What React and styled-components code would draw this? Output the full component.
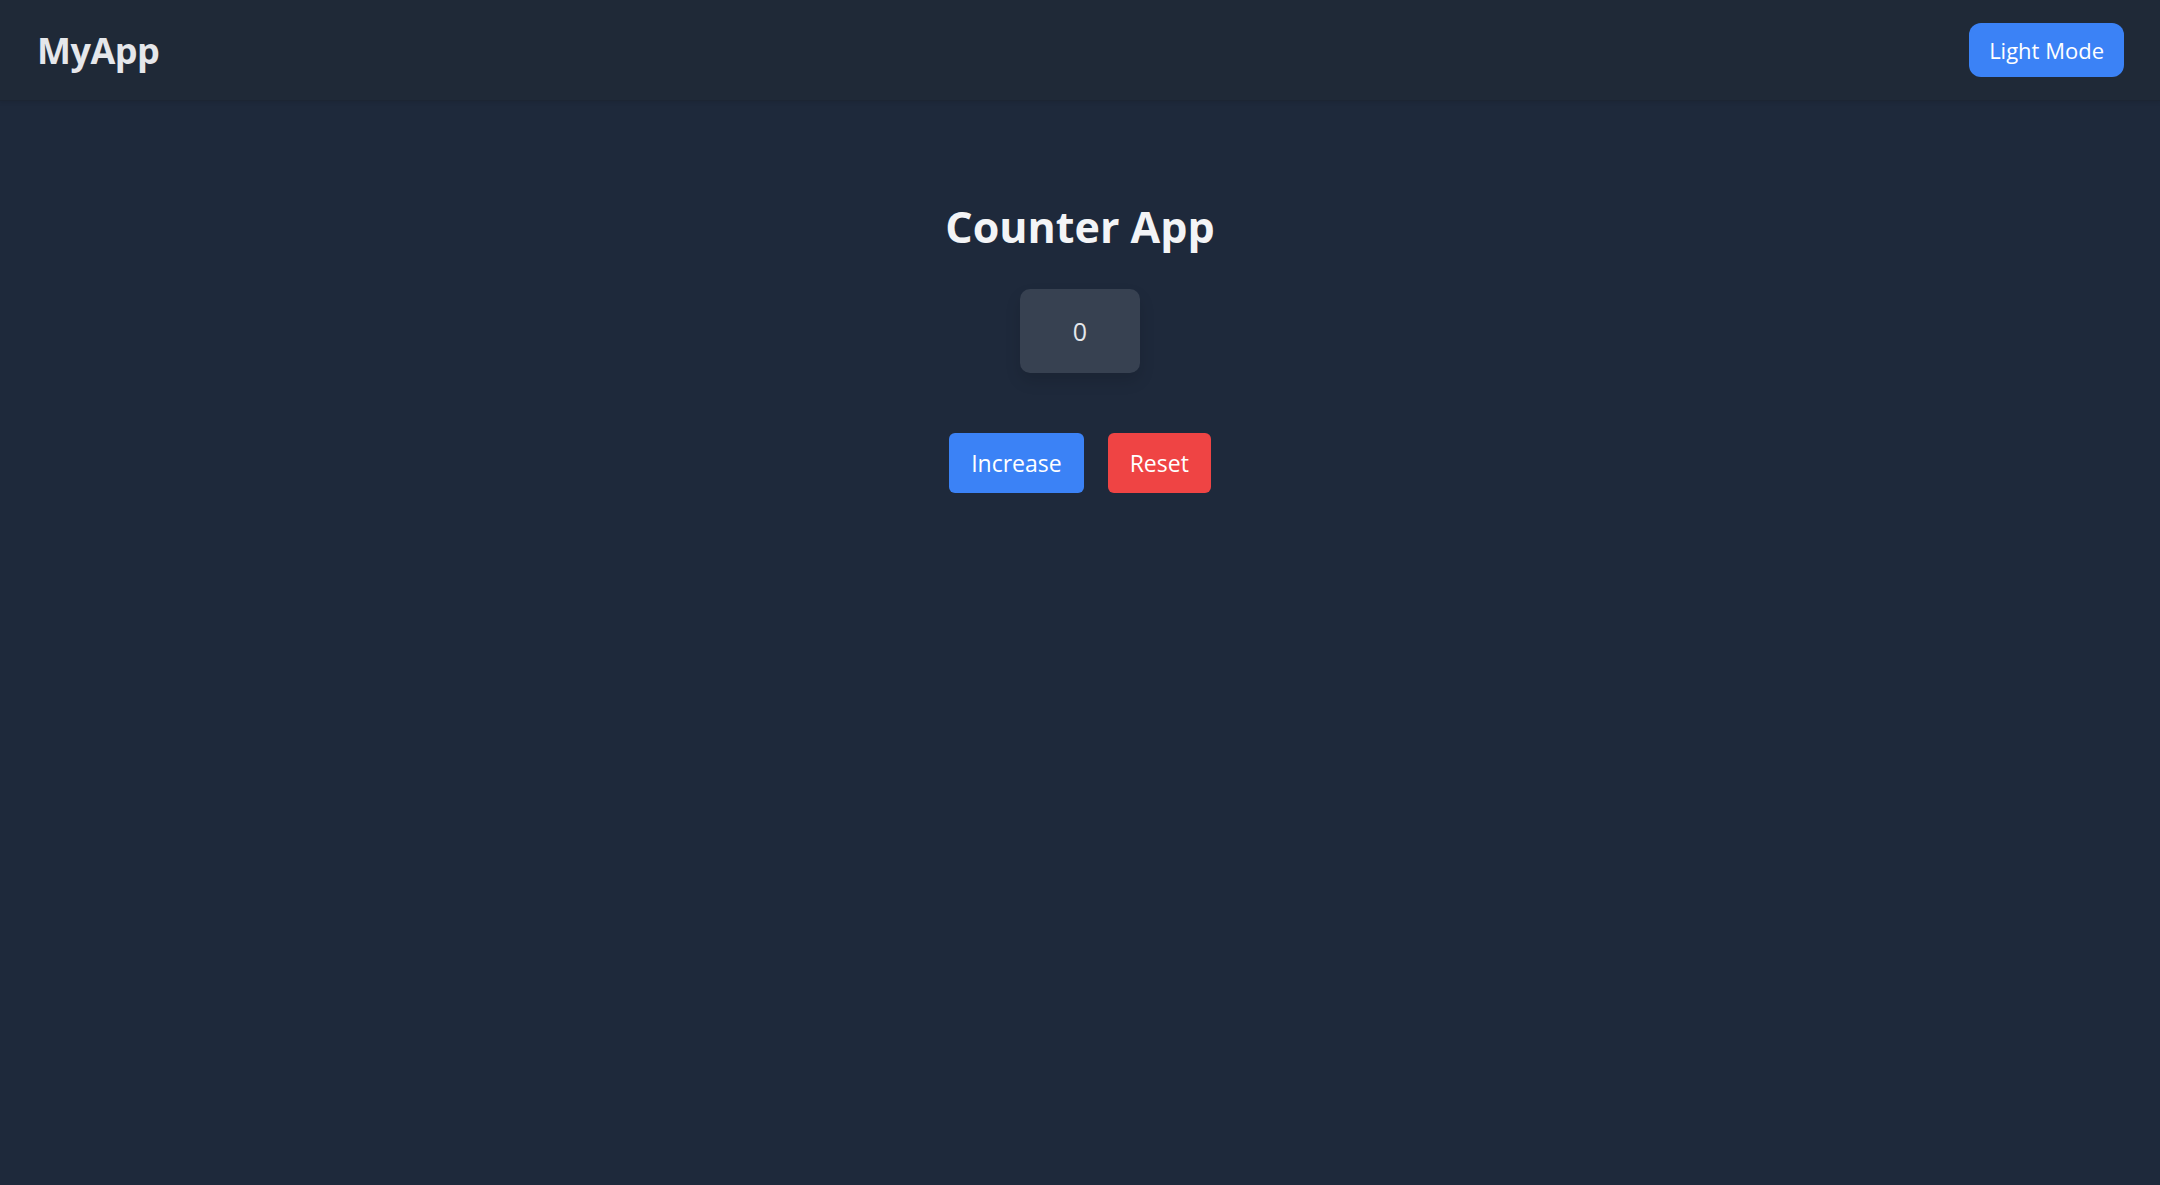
import React, { useState } from "react";
import styled, { createGlobalStyle } from "styled-components";

const GlobalStyle = createGlobalStyle`
  html, body {
    margin: 0;
    padding: 0;
    background-color: #1e293b;
    font-family: "Open Sans", "Noto Sans", sans-serif;
  }
`;

const Page = styled.div`
  min-height: 1185px;
  background-color: #1e293b;
  color: #f3f4f6;
`;

const Header = styled.header`
  height: 101px;
  box-sizing: border-box;
  padding: 0 36px 0 37px;
  display: flex;
  align-items: center;
  justify-content: space-between;
  background-color: #1f2937;
  border-bottom: 1px solid #1c2533;
  box-shadow: 0 2px 4px rgba(0, 0, 0, 0.08);
`;

const Logo = styled.h1`
  margin: 0;
  font-size: 36px;
  font-weight: 700;
  color: #e5e7eb;
  letter-spacing: -0.5px;
`;

const Button = styled.button`
  border: none;
  color: #ffffff;
  font-family: "Open Sans", "Noto Sans", sans-serif;
  font-size: ${(p) => p.$size || 22}px;
  line-height: 30px;
  padding: ${(p) => p.$pad || "12px 20px"};
  border-radius: ${(p) => p.$radius || 6}px;
  background-color: ${(p) => (p.$variant === "danger" ? "#ef4444" : "#3b82f6")};
  cursor: pointer;
`;

const Main = styled.main`
  display: flex;
  flex-direction: column;
  align-items: center;
  padding-top: 96px;
`;

const Title = styled.h2`
  margin: 0;
  font-size: 43px;
  font-weight: 700;
  color: #f3f4f6;
  line-height: 60px;
`;

const CountBox = styled.div`
  margin-top: 32px;
  width: 120px;
  height: 84px;
  display: flex;
  align-items: center;
  justify-content: center;
  background-color: #374151;
  border-radius: 10px;
  box-shadow: 0 8px 16px rgba(0, 0, 0, 0.12);
  font-size: 25px;
  color: #e5e7eb;
`;

const Actions = styled.div`
  margin-top: 60px;
  display: flex;
  gap: 24px;
`;

export default function App() {
  const [count, setCount] = useState(0);
  return (
    <Page>
      <GlobalStyle />
      <Header>
        <Logo>MyApp</Logo>
        <Button $radius={12}>Light Mode</Button>
      </Header>
      <Main>
        <Title>Counter App</Title>
        <CountBox>{count}</CountBox>
        <Actions>
          <Button $size={23} $pad="15px 22px" onClick={() => setCount(count + 1)}>
            Increase
          </Button>
          <Button $size={23} $pad="15px 22px" $variant="danger" onClick={() => setCount(0)}>
            Reset
          </Button>
        </Actions>
      </Main>
    </Page>
  );
}
